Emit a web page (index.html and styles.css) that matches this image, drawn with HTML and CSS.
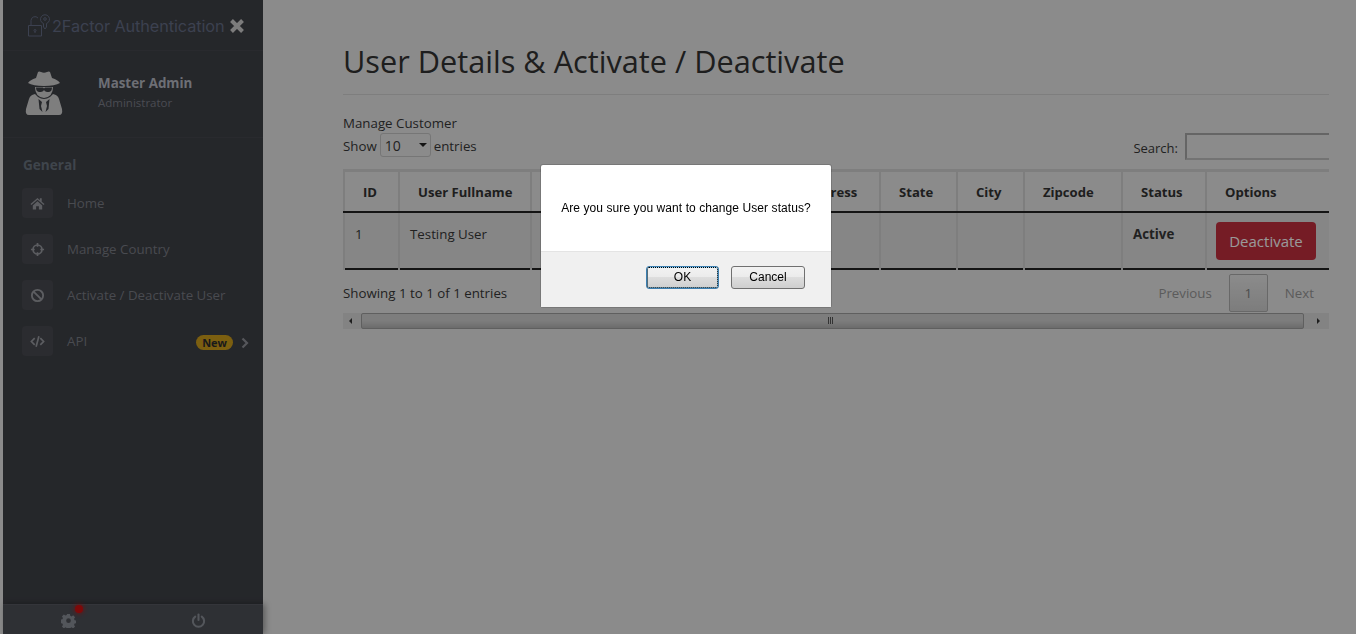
FILE: index.html
```html
<!DOCTYPE html>
<html lang="en">
<head>
    <meta charset="UTF-8">
    <meta name="viewport" content="width=device-width, initial-scale=1.0">
    <title>User Details &amp; Activate / Deactivate</title>
    <link rel="stylesheet" href="styles.css">
</head>
<body>
    <div class="app">
        <aside class="sidebar">
            <div class="brand">
                <svg class="brand-icon" viewBox="0 0 24 24" fill="none" stroke="currentColor" stroke-width="1">
                    <path d="M1.500 11.500h13v10.500h-13z"/>
                    <path d="M4 11.500V6.500a4 4 0 0 1 7-2.500"/>
                    <circle cx="8" cy="16.500" r="1"/>
                    <path d="M8 17.500v1.500"/>
                    <path d="M16.500 13V9.500a4.500 4.500 0 1 1 3 0V13l-1.500 2z"/>
                    <circle cx="18" cy="5" r="1.300"/>
                </svg>
                <span class="brand-name">2Factor Authentication</span>
                <svg class="brand-close" viewBox="0 0 16 16"><path d="M2.500 2.500l11 11M13.500 2.500l-11 11" stroke="currentColor" stroke-width="4"/></svg>
            </div>

            <div class="profile">
                <svg class="profile-icon" viewBox="0 0 38 44">
                    <path fill="currentColor" d="M11 7l2-6q1-1 3 0 3 1.500 6 0 2-1 3 0l2 6q6 2 8 5-5 3-16 3T3 12q2-3 8-5z"/>
                    <path fill="currentColor" d="M10 16h18q0 10-9 11-9-1-9-11z"/>
                    <path fill="#3f4147" d="M11 16.500h7l1 1 1-1h7q0 4-3 4.500h-2q-2.500-.5-3-2-.5 1.500-3 2h-2q-3-.5-3-4.500z"/>
                    <path fill="currentColor" d="M10 23q-5 1-6 5L1 38q-1 6 3 6h30q4 0 3-6l-3-10q-1-4-6-5l-3 3q-6 4-12 0z"/>
                    <path fill="#3f4147" d="M13.500 28l3.500 3-1 4 1.500 6-3-3zM24.500 28L21 31l1 4-1.500 6 3-3z"/>
                </svg>
                <div class="profile-text">
                    <div class="profile-name">Master Admin</div>
                    <div class="profile-role">Administrator</div>
                </div>
            </div>

            <div class="menu-title">General</div>
            <ul class="menu">
                <li class="menu-item">
                    <span class="menu-icon"><svg viewBox="0 0 16 16"><path fill="currentColor" d="M8 2L0.500 8.500l1 1L8 4l6.500 5.500 1-1L12.500 6V2.500h-2V4.500zM3 10v4.500h3.500V11h3v3.500H13V10L8 5.700z"/></svg></span>
                    <span class="menu-label">Home</span>
                </li>
                <li class="menu-item">
                    <span class="menu-icon"><svg viewBox="0 0 16 16" fill="none" stroke="currentColor" stroke-width="1.800"><circle cx="8" cy="8" r="4.800"/><path d="M8 1v4M8 11v4M1 8h4M11 8h4"/></svg></span>
                    <span class="menu-label">Manage Country</span>
                </li>
                <li class="menu-item">
                    <span class="menu-icon"><svg viewBox="0 0 16 16" fill="none" stroke="currentColor" stroke-width="2"><circle cx="8" cy="8" r="6"/><path d="M3.800 3.800l8.400 8.400"/></svg></span>
                    <span class="menu-label">Activate / Deactivate User</span>
                </li>
                <li class="menu-item">
                    <span class="menu-icon"><svg viewBox="0 0 16 16" fill="none" stroke="currentColor" stroke-width="1.800"><path d="M5 4.500L1.500 8 5 11.500M11 4.500L14.500 8 11 11.500M9.500 2.500l-3 11"/></svg></span>
                    <span class="menu-label">API</span>
                    <span class="badge">New</span>
                    <svg class="menu-arrow" viewBox="0 0 8 12" fill="none" stroke="currentColor" stroke-width="2.200"><path d="M1.500 1.500L6 6l-4.500 4.500"/></svg>
                </li>
            </ul>

            <div class="sidebar-footer">
                <a class="footer-link">
                    <svg viewBox="0 0 16 16"><path fill="currentColor" fill-rule="evenodd" d="M6.500 1h3l.4 2 1.400.6 1.700-1.100 2 2-1.100 1.700.6 1.400 2 .4v2.900l-2 .4-.6 1.400 1.100 1.700-2 2-1.700-1.100-1.400.6-.4 2h-3l-.4-2-1.400-.6-1.700 1.100-2-2 1.100-1.700-.6-1.400-2-.4V7.100l2-.4.6-1.400-1.100-1.700 2-2 1.700 1.100 1.400-.6zM8 5.700a2.500 2.500 0 1 0 0 5 2.500 2.500 0 0 0 0-5z"/></svg>
                    <span class="notice-dot"></span>
                </a>
                <a class="footer-link">
                    <svg viewBox="0 0 16 16" fill="none" stroke="currentColor" stroke-width="2.200" stroke-linecap="round"><path d="M8 1.500v6"/><path d="M4.500 3.800a6 6 0 1 0 7 0"/></svg>
                </a>
            </div>
        </aside>

        <main class="content">
            <h1 class="page-title">User Details &amp; Activate / Deactivate</h1>
            <div class="section-label">Manage Customer</div>

            <div class="table-tools">
                <label class="length-control">
                    Show
                    <span class="select-wrap">
                        <select class="length-select"><option>10</option></select>
                    </span>
                    entries
                </label>
                <label class="search-control">
                    <span class="search-label">Search:</span>
                    <input class="search-input" type="text">
                </label>
            </div>

            <table class="data-table">
                <thead>
                    <tr>
                        <th class="col-id">ID</th>
                        <th class="col-name">User Fullname</th>
                        <th class="col-email">Email</th>
                        <th class="col-mobile">Mobile</th>
                        <th class="col-address">Address</th>
                        <th class="col-state">State</th>
                        <th class="col-city">City</th>
                        <th class="col-zip">Zipcode</th>
                        <th class="col-status">Status</th>
                        <th class="col-options">Options</th>
                    </tr>
                </thead>
                <tbody>
                    <tr>
                        <td>1</td>
                        <td>Testing User</td>
                        <td></td>
                        <td></td>
                        <td></td>
                        <td></td>
                        <td></td>
                        <td></td>
                        <td><strong>Active</strong></td>
                        <td><button class="btn-danger">Deactivate</button></td>
                    </tr>
                </tbody>
            </table>

            <div class="table-footer">
                <div class="table-info">Showing 1 to 1 of 1 entries</div>
                <div class="pager">
                    <span class="pager-link">Previous</span>
                    <span class="pager-current">1</span>
                    <span class="pager-link">Next</span>
                </div>
            </div>

            <div class="hscroll">
                <span class="hscroll-btn"><i class="arrow-left"></i></span>
                <div class="hscroll-thumb"><span class="grip"></span></div>
                <span class="hscroll-btn"><i class="arrow-right"></i></span>
            </div>
        </main>
    </div>

    <div class="overlay">
        <div class="dialog">
            <div class="dialog-body">Are you sure you want to change User status?</div>
            <div class="dialog-footer">
                <button class="dialog-btn is-focused">OK</button>
                <button class="dialog-btn">Cancel</button>
            </div>
        </div>
    </div>
</body>
</html>
```

FILE: styles.css
```css
* { box-sizing: border-box; }
html, body { height: 100%; }
body { margin: 0; background: #e8e8e8; color: #383838; font-family: "Open Sans", Arial, sans-serif; font-size: 13.3px; overflow: hidden; }
.app { display: flex; height: 634px; }

/* sidebar */
.sidebar { width: 260px; margin-left: 3px; background: #3f4147; display: flex; flex-direction: column; flex-shrink: 0; }
.brand { height: 51px; display: flex; align-items: center; padding: 1px 0 0 24px; color: #646d85; border-bottom: 1px solid #45474d; }
.brand-icon { width: 24px; height: 24px; flex-shrink: 0; }
.brand-name { font-family: Inter, sans-serif; font-size: 16.3px; font-weight: 400; margin-left: 1px; white-space: nowrap; letter-spacing: -.1px; }
.brand-close { width: 16px; height: 16px; margin-left: 5px; color: #cfcfcf; flex-shrink: 0; }
.profile { height: 87px; display: flex; align-items: center; padding: 0 0 3px 22px; border-bottom: 1px solid #45474d; }
.profile-icon { width: 38px; height: 44px; color: #d2d2d2; flex-shrink: 0; }
.profile-text { margin-left: 35px; margin-top: 1px; }
.profile-name { font-weight: 700; font-size: 13.4px; color: #b6b9c3; line-height: 19px; }
.profile-role { font-size: 11.5px; color: #7c7f89; line-height: 20px; }
.menu-title { margin: 17px 0 0 20px; font-weight: 700; font-size: 13.6px; line-height: 19px; color: #69747f; }
.menu { list-style: none; margin: 14px 0 0; padding: 0 0 0 19px; }
.menu-item { display: flex; align-items: center; height: 30px; margin-bottom: 16px; color: #7a7d85; }
.menu-icon { width: 31px; height: 30px; border-radius: 4px; background: #484a51; display: flex; align-items: center; justify-content: center; color: #9a9ca2; }
.menu-icon svg { width: 15px; height: 15px; }
.menu-label { margin-left: 14px; }
.badge { margin-left: auto; background: #cf9e1b; color: #2c2c2c; font-weight: 700; font-size: 11px; line-height: 15px; height: 15px; padding: 0 6px; border-radius: 8px; margin-top: 2px; }
.menu-arrow { width: 8px; height: 12px; margin: 3px 14px 0 8px; color: #8f9198; }
.sidebar-footer { margin-top: auto; height: 30px; display: flex; background: #4e5058; border-top: 1px solid #575961; box-shadow: 2px 0 6px rgba(0, 0, 0, .35); color: #8b9098; }
.footer-link { flex: 1; display: flex; align-items: center; justify-content: center; position: relative; }
.footer-link svg { width: 15px; height: 15px; margin-top: 2px; }
.notice-dot { position: absolute; left: 72px; top: 0; width: 8px; height: 8px; border-radius: 50%; background: #d01010; box-shadow: 0 0 5px #d01010; }

/* main area */
.content { flex: 1; min-width: 0; padding: 39px 27px 0 80px; }
.page-title { margin: 0; padding-bottom: 10px; font-size: 30.7px; line-height: 45px; font-weight: 400; color: #333; border-bottom: 1px solid #d2d2d2; }
.section-label { margin-top: 19px; line-height: 19px; }
.table-tools { display: flex; justify-content: space-between; align-items: flex-end; height: 27px; }
.length-control { display: flex; align-items: center; gap: 3px; margin-bottom: 3px; padding-top: 0; }
.select-wrap { position: relative; display: block; margin-top: -2px; }
.select-wrap::after { content: ""; position: absolute; right: 4px; top: 10px; border: 4px solid transparent; border-top-color: #222; border-bottom: 0; pointer-events: none; }
.length-select { display: block; appearance: none; width: 51px; height: 24px; padding: 0 0 0 4px; border: 1px solid #c5c5c5; border-radius: 3px; background: #e8e8e8; color: #383838; font: 14px "Open Sans", sans-serif; }
.search-control { display: flex; align-items: center; gap: 7px; font-size: 13px; }
.search-label { padding-top: 2px; }
.search-input { width: 144px; height: 27px; border: 2px solid #c0c0c0; border-top-color: #a8a8a8; border-left-color: #a8a8a8; border-right: 0; background: transparent; margin: 0; }

.data-table { width: 985px; margin-top: 9px; table-layout: fixed; border-collapse: collapse; border-top: 3px solid #d2d2d2; border-bottom: 2px solid #222; }
.data-table th { height: 41px; padding: 1px 0 0 18px; text-align: left; font-weight: 700; font-size: 13.1px; color: #333; border: 2px solid #d2d2d2; border-top: 0; border-bottom: 2px solid #222; }
.data-table td { height: 57px; padding: 0 0 0 10px; vertical-align: top; line-height: 42px; background: #dfdfdf; border: 2px solid #d2d2d2; border-top: 0; border-bottom: 0; }
.data-table tr > :last-child { border-right: 0; }
.data-table strong { display: block; line-height: 42px; }
.col-id { width: 55px; }
.col-name { width: 132px; }
.col-email { width: 125px; }
.col-mobile { width: 130px; }
.col-address { width: 94px; }
.col-state { width: 77px; }
.col-city { width: 67px; }
.col-zip { width: 98px; }
.col-status { width: 84px; }
.col-options { width: 123px; }
.btn-danger { display: block; width: 100px; height: 38px; margin: 9px 0 0 -1px; border: 0; border-radius: 4px; background: #c32f3f; color: #fff; font: 15px "Open Sans", sans-serif; }

.table-footer { display: flex; justify-content: space-between; align-items: center; height: 43px; margin-top: 2px; }
.table-info { margin-top: -1px; }
.pager { display: flex; align-items: center; padding-right: 15px; }
.pager-link { color: #989898; }
.pager-current { width: 39px; height: 38px; margin: 0 17px; border: 1px solid #aeaeae; border-radius: 2px; background: linear-gradient(#e8e8e8, #d0d0d0); display: flex; align-items: center; justify-content: center; color: #808080; }
.hscroll { display: flex; align-items: stretch; height: 16px; margin-top: -2px; background: #dadada; }
.hscroll-btn { width: 18px; flex-shrink: 0; display: flex; align-items: center; justify-content: center; padding-right: 3px; }
.arrow-left { border: 3px solid transparent; border-right-color: #333; border-left: 0; }
.arrow-right { border: 3px solid transparent; border-left-color: #333; border-right: 0; }
.hscroll-thumb { flex: 1; margin-right: 7px; border: 1px solid #9f9f9f; border-radius: 2px; background: linear-gradient(#d0d0d0, #d0d0d0 50%, #b4b4b4); display: flex; align-items: center; justify-content: center; }
.grip { width: 6px; height: 7px; margin-left: -3px; background: repeating-linear-gradient(90deg, #555 0 1px, transparent 1px 2px); }

/* confirm box over the dimmed page */
.overlay { position: fixed; inset: 0; background: rgba(0, 0, 0, .4); }
.dialog { position: absolute; left: 541px; top: 165px; width: 290px; height: 142px; background: #fff; border-radius: 2px; font-family: "Liberation Sans", Arial, sans-serif; font-size: 12px; color: #000; display: flex; flex-direction: column; box-shadow: 0 0 0 1px rgba(0, 0, 0, .15); }
.dialog-body { height: 87px; display: flex; align-items: center; justify-content: center; border-bottom: 1px solid #e4e4e4; letter-spacing: .08px; }
.dialog-footer { flex: 1; display: flex; justify-content: flex-end; align-items: flex-start; gap: 12px; padding: 14px 26px 0 0; background: #f0f0f0; }
.dialog-btn { width: 74px; height: 23px; padding: 0 0 1px; border: 1px solid #707070; border-radius: 3px; background: linear-gradient(#f2f2f2, #ebebeb 50%, #dddddd 50%, #cfcfcf); font: 12px "Liberation Sans", Arial, sans-serif; color: #000; }
.dialog-btn.is-focused { width: 73px; border: 1px solid #3c7fb1; outline: 1px dotted #000; outline-offset: -2px; box-shadow: inset 0 0 0 1px #a6d8f2; }
```
